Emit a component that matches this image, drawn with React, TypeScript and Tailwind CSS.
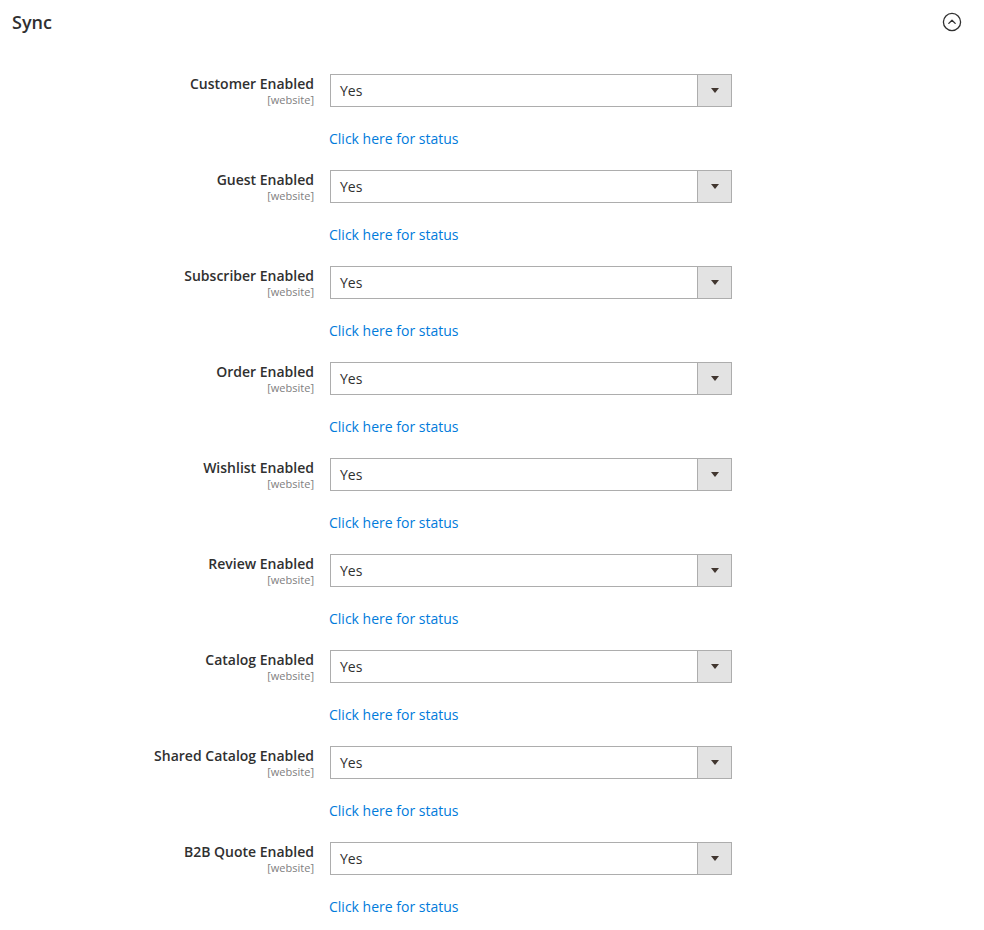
import React from 'react';

const fields = [
    'Customer Enabled',
    'Guest Enabled',
    'Subscriber Enabled',
    'Order Enabled',
    'Wishlist Enabled',
    'Review Enabled',
    'Catalog Enabled',
    'Shared Catalog Enabled',
    'B2B Quote Enabled',
];

const CollapseIcon = () => (
    <svg width="20" height="20" viewBox="0 0 20 20" fill="none" stroke="#303030" strokeWidth="1.3">
        <circle cx="10" cy="10" r="8.6" />
        <path d="M6.8 11.4 L10 8.2 L13.2 11.4" strokeLinecap="round" strokeLinejoin="round" />
    </svg>
);

const SelectBox = () => (
    <div className="flex h-[33px] w-[402px] border border-[#adadad] bg-white">
        <div className="flex flex-1 items-center pl-[9px] text-[14px] text-[#303030]">Yes</div>
        <div className="flex w-[34px] items-center justify-center border-l border-[#adadad] bg-[#e3e3e3]">
            <svg width="8" height="5" viewBox="0 0 8 5">
                <path d="M0 0 H8 L4 5 Z" fill="#41362f" />
            </svg>
        </div>
    </div>
);

const App = () => {
    return (
        <div className="min-h-screen bg-white font-['Open_Sans',sans-serif] text-[#303030]">
            {/* Section header */}
            <div className="flex items-center justify-between pl-[12px] pr-[22px] pt-[9px]">
                <h2 className="text-[18px] font-semibold leading-[26px]">Sync</h2>
                <CollapseIcon />
            </div>

            {/* Fields */}
            <div className="mt-[39px] flex flex-col">
                {fields.map((label) => (
                    <div key={label} className="flex h-[96px]">
                        <div className="w-[314px] text-right">
                            <div className="text-[14px] font-semibold leading-[20px]">{label}</div>
                            <div className="text-[11px] leading-[11px] text-[#808080]">[website]</div>
                        </div>
                        <div className="ml-[16px]">
                            <SelectBox />
                            <a href="#" className="-ml-px mt-[22px] block text-[14px] leading-[20px] text-[#007bdb]">
                                Click here for status
                            </a>
                        </div>
                    </div>
                ))}
            </div>
        </div>
    );
};

export default App;
